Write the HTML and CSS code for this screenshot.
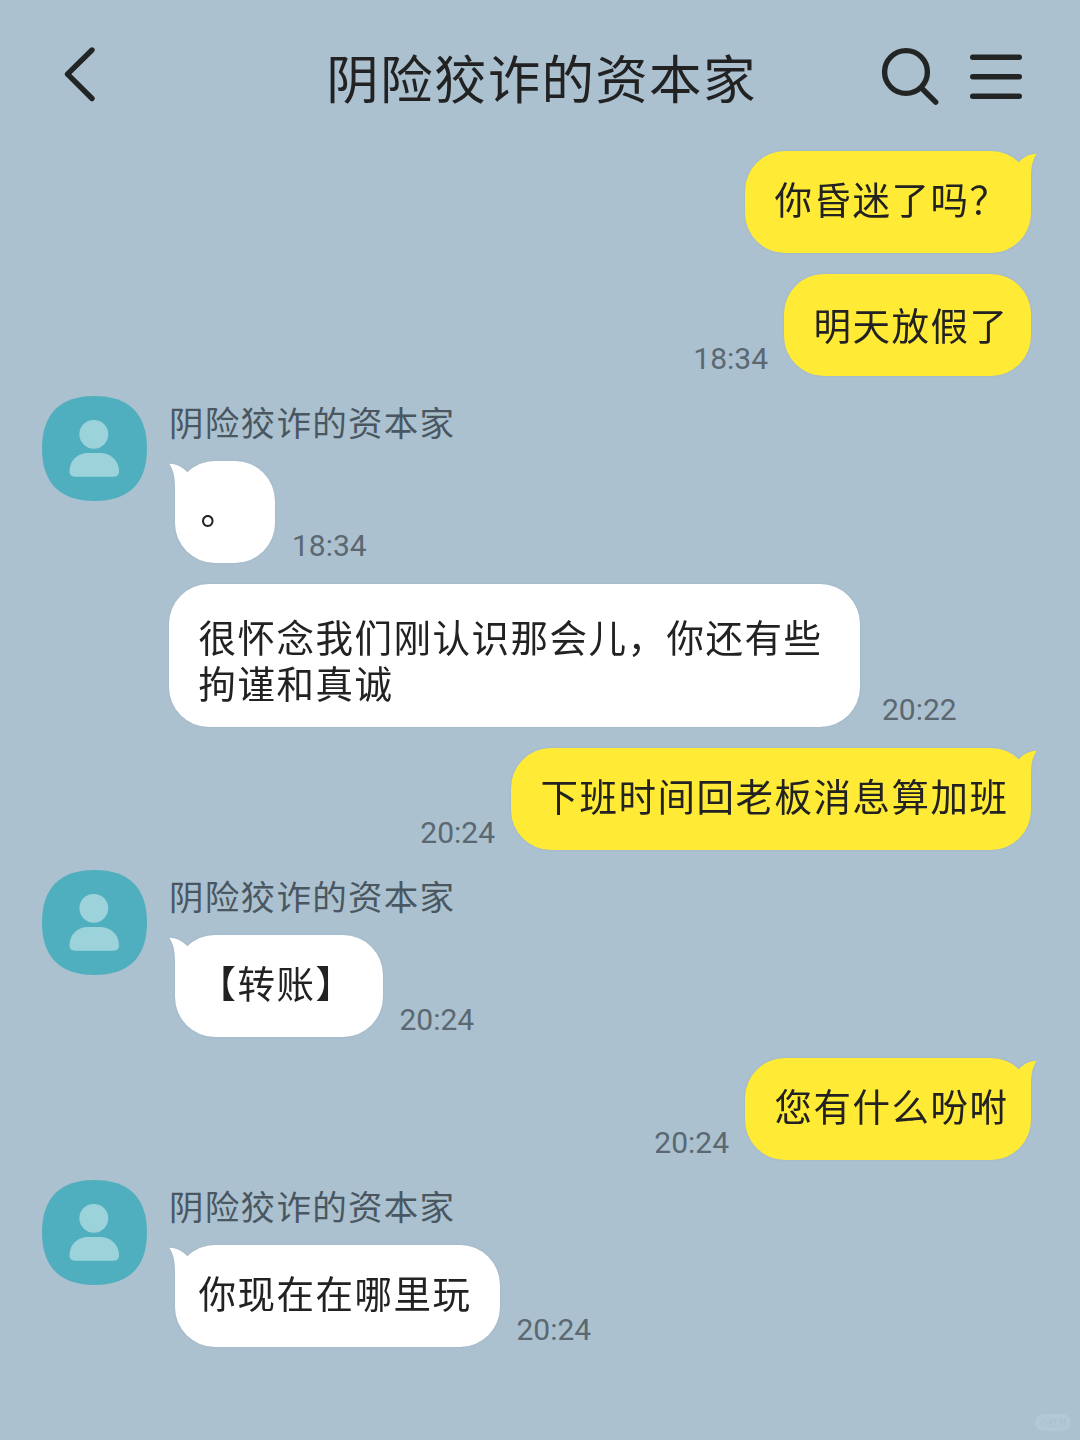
FILE: index.html
```html
<!DOCTYPE html>
<html lang="zh-CN">
<head>
    <meta charset="UTF-8" />
    <meta name="viewport" content="width=device-width, initial-scale=1.0" />
    <title>阴险狡诈的资本家</title>
    <link rel="stylesheet" href="styles.css">
</head>
<body>
    <!-- shared shapes -->
    <svg class="defs" width="0" height="0">
        <symbol id="tail" viewBox="0 0 18 40">
            <path d="M0.3 2.8C7 3 12.5 5.5 18 10.8V40H6V28C6 17 5 10 0.3 2.8Z" />
        </symbol>
        <symbol id="avatar" viewBox="0 0 105 105">
            <path fill="#50afbe" d="M52.5 0C87 0 105 18 105 52.5S87 105 52.5 105 0 87 0 52.5 18 0 52.5 0Z" />
            <circle fill="#9cd3da" cx="51.8" cy="38.3" r="14.4" />
            <path fill="#9cd3da" d="M27.5 75.5C27.5 64 36 57 46 57H58C68 57 77 64 77 75.5C77 79 74.5 80.7 71 80.7H33.5C30 80.7 27.5 79 27.5 75.5Z" />
        </symbol>
    </svg>

    <div class="phone">
        <header class="header">
            <svg class="back" width="36" height="60" viewBox="0 0 36 60">
                <path d="M32 4L7.5 28.2L32 52.5" />
            </svg>
            <h1>阴险狡诈的资本家</h1>
            <div class="actions">
                <svg width="60" height="60" viewBox="0 0 60 60">
                    <circle cx="26" cy="26" r="21.4" />
                    <path d="M41.5 42L55.7 56.2" />
                </svg>
                <svg width="54" height="50" viewBox="0 0 54 50">
                    <path d="M3.7 6.3H50.3M3.7 25.7H50.3M3.7 45.3H50.3" />
                </svg>
            </div>
        </header>

        <main class="chat">
            <div class="row mine">
                <div class="bubble with-tail">你昏迷了吗？<svg class="tail"><use href="#tail" /></svg></div>
            </div>
            <div class="row mine">
                <div class="bubble">明天放假了</div>
                <time>18:34</time>
            </div>

            <section class="group">
                <svg class="avatar"><use href="#avatar" /></svg>
                <div class="messages">
                    <div class="name">阴险狡诈的资本家</div>
                    <div class="row">
                        <div class="bubble with-tail short">。<svg class="tail"><use href="#tail" /></svg></div>
                        <time>18:34</time>
                    </div>
                    <div class="row next">
                        <div class="bubble">很怀念我们刚认识那会儿，你还有些拘谨和真诚</div>
                        <time>20:22</time>
                    </div>
                </div>
            </section>

            <div class="row mine">
                <div class="bubble with-tail">下班时间回老板消息算加班<svg class="tail"><use href="#tail" /></svg></div>
                <time>20:24</time>
            </div>

            <section class="group">
                <svg class="avatar"><use href="#avatar" /></svg>
                <div class="messages">
                    <div class="name">阴险狡诈的资本家</div>
                    <div class="row">
                        <div class="bubble with-tail">【转账】<svg class="tail"><use href="#tail" /></svg></div>
                        <time>20:24</time>
                    </div>
                </div>
            </section>

            <div class="row mine">
                <div class="bubble with-tail">您有什么吩咐<svg class="tail"><use href="#tail" /></svg></div>
                <time>20:24</time>
            </div>

            <section class="group">
                <svg class="avatar"><use href="#avatar" /></svg>
                <div class="messages">
                    <div class="name">阴险狡诈的资本家</div>
                    <div class="row">
                        <div class="bubble with-tail">你现在在哪里玩<svg class="tail"><use href="#tail" /></svg></div>
                        <time>20:24</time>
                    </div>
                </div>
            </section>
        </main>

        <span class="watermark">小红书</span>
    </div>
</body>
</html>
```
FILE: styles.css
```css
* {
    box-sizing: border-box;
}

body {
    margin: 0;
    background: #abc1d0;
    color: #222;
    font-family: "Noto Sans CJK SC", sans-serif;
    font-weight: 400;
}

.defs {
    position: absolute;
}

.phone {
    position: relative;
    width: 1080px;
    height: 1440px;
    overflow: hidden;
}

/* Header */
.header {
    display: grid;
    grid-template-columns: 200px 1fr 200px;
    align-items: center;
    height: 151px;
    padding: 0 57px 0 60px;
}

.header svg {
    fill: none;
    stroke: #222524;
    stroke-width: 5.4;
    stroke-linecap: round;
    stroke-linejoin: round;
}

.header h1 {
    margin: 0;
    font-size: 52.5px;
    font-weight: 400;
    letter-spacing: 1.3px;
    text-align: center;
    white-space: nowrap;
}

.actions {
    display: flex;
    justify-content: flex-end;
    align-items: center;
    gap: 29px;
}

/* Messages */
.chat {
    display: flex;
    flex-direction: column;
    gap: 21px;
    padding: 0 49px 0 42px;
}

.row {
    display: flex;
    align-items: flex-end;
    gap: 17px;
}

.row.mine {
    flex-direction: row-reverse;
    gap: 16px;
}

.row.next {
    gap: 22px;
    margin-top: 21px;
}

.bubble {
    position: relative;
    min-width: 100px;
    min-height: 102px;
    max-width: 691px;
    padding: 29px 22.5px 22px 29.5px;
    border-radius: 40px;
    background: #fff;
    font-size: 37.5px;
    letter-spacing: 1.5px;
    line-height: 46px;
    filter: drop-shadow(0 0 1px rgba(70, 100, 130, 0.15));
}

.mine .bubble {
    padding-top: 27px;
    background: #ffea35;
}

.bubble.with-tail {
    padding-top: 24px;
}

.messages .with-tail {
    margin-left: 6px;
    padding-left: 23.5px;
    padding-right: 28px;
}

.messages .short {
    padding-left: 25.5px;
}

.tail {
    position: absolute;
    top: 0;
    left: -6px;
    width: 18px;
    height: 40px;
    fill: #fff;
}

.mine .tail {
    left: auto;
    right: -6px;
    fill: #ffea35;
    transform: scaleX(-1);
}

time {
    color: #5b6871;
    font-family: Roboto, sans-serif;
    font-size: 30px;
    font-weight: 400;
    line-height: 35px;
}

.group {
    display: flex;
    gap: 22px;
}

.avatar {
    flex: none;
    width: 105px;
    height: 105px;
    margin-top: -1px;
}

.name {
    height: 64px;
    color: #4a5760;
    font-size: 34.5px;
    letter-spacing: 1.3px;
    line-height: 48px;
}

/* Watermark */
.watermark {
    position: absolute;
    right: 9px;
    bottom: 9px;
    width: 36px;
    height: 17px;
    border-radius: 9px;
    background: rgba(190, 210, 225, 0.4);
    color: rgba(150, 175, 192, 0.4);
    font-size: 9px;
    line-height: 17px;
    text-align: center;
}
```
